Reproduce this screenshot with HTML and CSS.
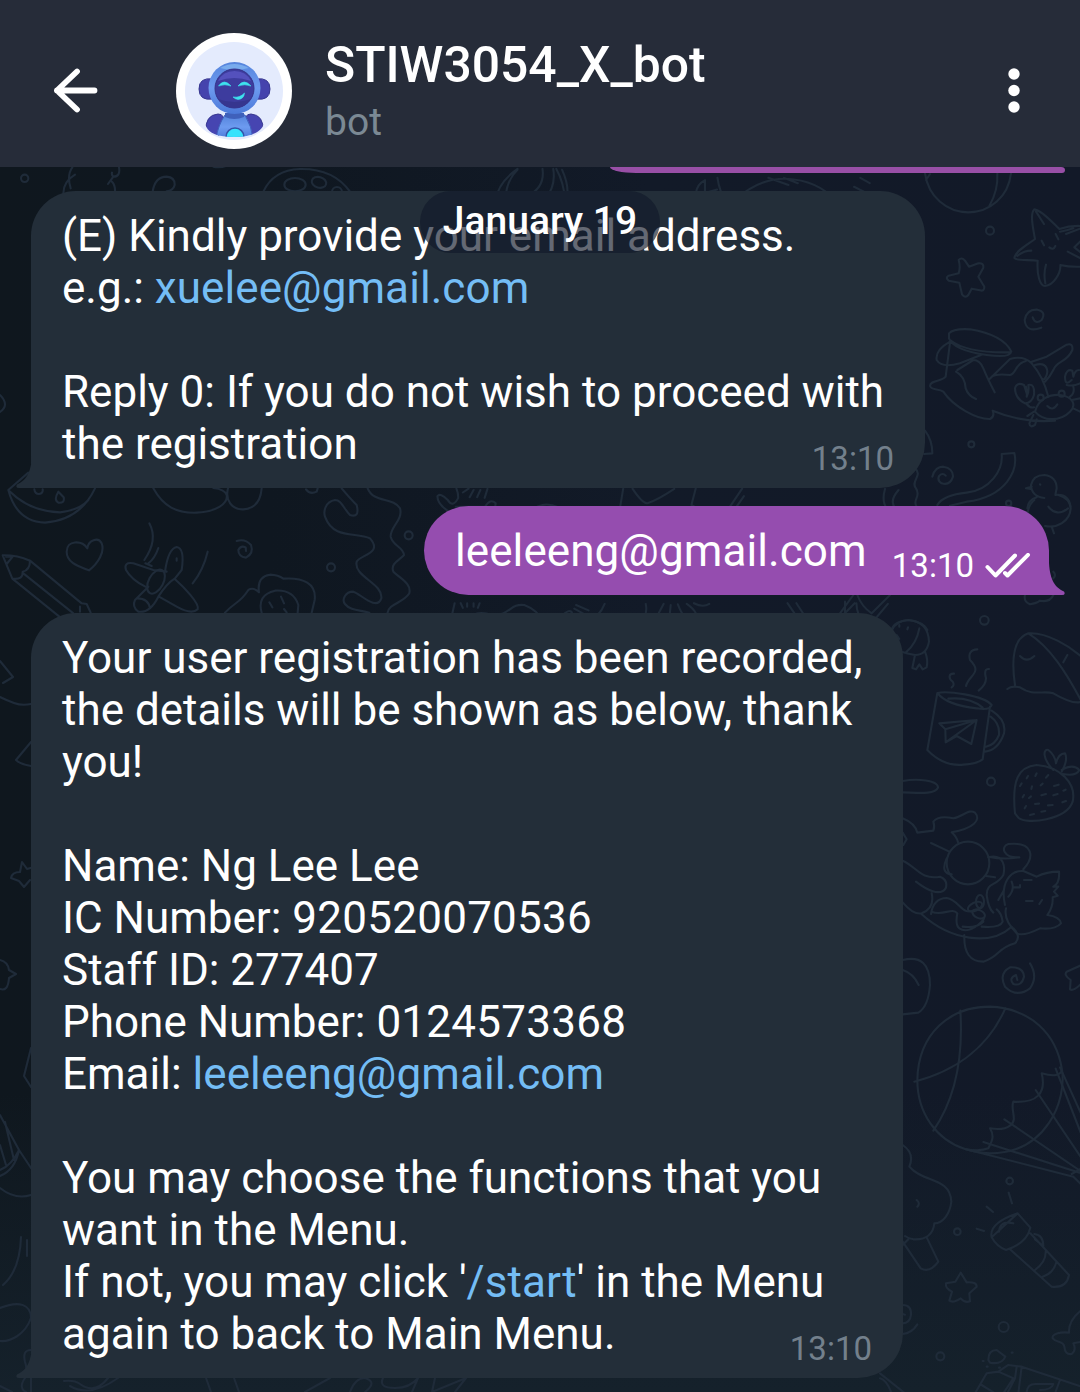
FILE: index.html
```html
<!DOCTYPE html>
<html lang="en">
<head>
<meta charset="utf-8">
<title>STIW3054_X_bot</title>
<link rel="stylesheet" href="styles.css">
</head>
<body>
<div class="app">
  <svg class="wallpaper" viewBox="0 0 1080 1392" aria-hidden="true">
    <!-- top strip -->
    <g transform="translate(0 160) scale(.33333)">
      <circle cx="74" cy="55" r="11"/>
      <path d="M217 22Q200 45 212 85M225 44Q190 65 190 100M357 22Q362 50 340 50Q334 44 336 38M340 50L324 72M336 65Q346 75 345 95M458 95Q465 50 500 50Q525 52 524 75Q520 92 500 94M640 20Q660 24 680 17M790 95Q820 30 900 27Q1000 25 1050 95"/>
      <ellipse cx="885" cy="74" rx="32" ry="20"/><ellipse cx="957" cy="67" rx="22" ry="16" transform="rotate(15 957 67)"/><circle cx="1011" cy="96" r="15"/>
    </g>
    <g transform="translate(380 160) scale(.4464)">
      <path d="M258 92Q265 50 308 20M282 92Q280 50 308 22M332 80Q370 60 364 20M368 90Q395 60 388 20M395 20Q412 50 415 92M408 22Q425 60 418 85L464 72Q465 80 455 92M712 92Q700 60 728 45V74L755 66M756 40Q760 70 775 92M792 92Q850 40 910 42Q980 45 1022 92M870 40L915 56M905 40L936 52M1062 60L1098 78M1076 40L1097 52"/>
    </g>
    <!-- right side, beside the first message -->
    <g transform="translate(900 160) scale(.33333)">
      <path d="M75 40C85 110 140 157 205 157S325 110 333 40M292 40Q295 90 268 138M78 60L90 42"/>
      <circle cx="270" cy="212" r="12"/><circle cx="214" cy="853" r="9"/><circle cx="326" cy="1030" r="8"/>
      <path d="M405 237C398 200 390 160 403 148C425 150 460 190 478 207Q510 196 545 198M405 237C380 255 345 275 343 294C350 304 390 298 413 302C410 345 420 378 435 378C460 376 483 340 481 315Q510 322 545 320M408 155L432 192M352 288Q370 272 394 272M436 370Q430 340 438 314M480 215Q500 212 520 205M503 275L540 294M498 222L540 206M545 240L523 262L545 280M448 262Q460 272 466 258M467 222L475 238M425 242L432 256"/>
      <path d="M176 300Q185 290 195 302L207 320L235 310Q252 308 250 323L235 350L253 380Q253 395 240 391L215 386L205 405Q196 416 186 403L178 368L146 362Q135 354 146 347L176 340Q182 322 176 300Z"/>
      <path d="M398 472Q406 495 425 480Q440 455 412 449Q380 447 374 480Q378 520 424 503"/>
      <path d="M147 520Q160 505 210 508Q310 525 334 575Q330 595 260 585Q160 570 147 535ZM150 540Q200 580 333 577M150 545Q105 570 110 600Q125 625 180 610L243 585M150 548L137 650M137 650C125 665 90 660 90 678C95 692 115 685 130 695C160 740 230 778 270 777Q285 770 278 752Q370 790 465 782M168 635Q195 650 197 685Q205 708 228 717M172 630L220 600Q240 600 250 625T284 697M268 658L330 597Q370 585 395 610Q430 650 445 710M275 650Q290 640 330 645C350 640 345 610 378 603M395 605L440 590L500 554Q520 548 517 570C500 610 470 600 460 630Q450 650 435 665M405 615Q440 605 442 635Q440 655 428 660"/>
      <path d="M405 755C415 715 450 703 480 705C520 710 530 735 510 755C480 785 430 785 405 755ZM378 680Q382 700 380 710Q388 695 385 675Q405 670 402 705Q395 730 375 730Q345 715 345 685Q350 665 372 675L380 700M380 732Q390 745 402 742M515 660Q495 680 495 650Q500 625 517 632L520 650Q525 630 537 630M500 675Q520 680 540 670M520 680Q525 700 510 710M442 738Q458 755 472 733M402 755L382 768M400 765L388 790Q390 805 405 795L410 778M520 745L540 755M515 720L540 715"/>
      <circle cx="422" cy="713" r="9"/><circle cx="485" cy="701" r="9"/>
      <path d="M75 812Q97 840 97 880L72 882M45 925C70 945 30 965 48 985C65 1010 35 1020 50 1040M97 950Q105 920 130 920Q160 925 159 950Q150 978 125 970Q110 960 118 947Q128 937 137 947M112 1035Q130 1005 200 998C270 990 310 930 305 882L343 879C355 930 320 1010 200 1025L150 1037"/>
      <path d="M433 1014Q395 1010 393 975Q400 945 433 945Q470 950 470 985L466 1005Q505 1000 512 1040M395 988L378 985L395 980M410 1012Q385 1020 382 1045M420 973L421 974"/>
    </g>
    <!-- around the outgoing message -->
    <g transform="translate(0 440) scale(.33333)">
      <path d="M25 150L85 98M25 150Q50 245 135 248Q240 240 285 145M27 152Q90 215 180 217Q240 210 265 180M103 148Q105 162 117 162Q130 160 128 148M175 155Q160 180 175 188Q195 190 191 172ZM460 145C490 200 530 220 590 218C650 215 685 190 680 165Q675 148 640 144M684 145C675 180 695 210 730 208Q780 205 785 145M918 148Q930 165 950 155L953 145M262 325C245 300 200 300 200 335C200 370 240 380 267 391C295 370 315 335 305 310C295 290 265 300 262 325Z"/>
      <path d="M8 346Q50 345 90 362L245 490L260 492L272 518M8 346L37 416L178 530M37 416Q70 420 68 395Q90 390 90 362M70 400L220 520M240 500V515M18 350L38 350L20 372"/>
      <path d="M448 250Q475 300 433 360M475 324Q465 355 445 370M623 335Q610 390 578 430M436 370L455 378M436 440Q395 420 378 390Q370 365 400 370L460 390L500 395M495 395Q505 325 530 321Q555 325 545 390L525 415Q500 430 475 470Q450 520 415 515Q395 500 405 480L445 440M525 418C550 440 600 490 593 508Q575 525 530 500L477 470M412 475Q445 475 450 505M530 355V362"/>
      <ellipse cx="468" cy="425" rx="22" ry="39" transform="rotate(28 468 425)"/>
      <path d="M710 303Q735 295 753 315Q762 340 738 353Q715 350 715 330Q722 315 737 322L738 333"/>
      <circle cx="993" cy="382" r="12"/><circle cx="1226" cy="286" r="12"/>
      <path d="M675 518C705 485 720 490 745 450Q760 440 777 457Q770 410 810 404Q835 405 850 416C910 412 950 430 944 480L935 518M785 518Q770 465 825 452Q880 448 895 495L893 518M808 487L817 502M843 470L852 490M852 507L860 517"/>
      <path d="M1025 145Q1050 175 1070 195Q1080 235 1050 225C1030 205 1025 180 1005 180C975 185 970 215 975 230C1000 300 1070 275 1110 295C1150 340 1080 345 1070 365C1060 410 1150 430 1144 475C1130 515 1080 460 1060 455C1035 455 1025 480 1035 492C1050 512 1080 510 1108 518M1103 145C1120 190 1180 170 1200 205C1210 240 1170 260 1172 290C1180 320 1210 320 1212 345C1200 360 1170 370 1180 395C1200 415 1235 430 1228 460C1210 490 1165 490 1162 520"/>
    </g>
    <g transform="translate(360 480) scale(.35714)">
      <path d="M248 88Q215 65 217 45Q225 35 245 55Q260 80 275 50Q275 35 270 24M288 35L304 24M318 28L307 48M337 28L328 48M357 25L349 50M268 75H350Q365 50 380 65L378 78M490 78Q520 60 555 76M737 24L728 78M763 24Q790 65 805 65Q830 58 880 25M940 24L928 70L943 78M1070 24L1035 76M1075 45L1052 78M1470 25Q1460 60 1475 80M1508 28Q1480 60 1500 80"/>
      <path d="M265 345L253 398M282 345L288 358M300 345V355M318 345V355M335 345L330 358M302 398C310 370 340 368 370 378C420 380 420 345 460 350Q500 365 512 398M485 398L570 376Q600 350 595 398M515 398L560 388M605 350L640 365M600 360L635 380M600 375L630 392M685 347Q670 385 642 388M730 398Q735 385 760 398M800 347Q805 370 795 385Q805 400 830 385L850 347M865 398L870 350M890 348Q910 400 935 395Q955 375 915 347M935 345Q960 358 978 347M1197 345L1228 390Q1240 395 1245 380L1222 345M1333 398L1385 345M1365 398L1360 375M1478 347L1430 404M1390 345Q1390 380 1415 400"/>
      <circle cx="1055" cy="395" r="13"/>
    </g>
    <g transform="translate(840 430) scale(.33333)">
      <path d="M563 250Q565 225 583 210M655 195Q690 205 692 235C690 275 650 295 615 288M625 230Q650 262 684 235M635 290L642 310M640 425Q650 435 640 445M555 495Q550 515 570 523Q590 520 600 512Q630 518 640 495M0 550L40 495M15 550V515M52 495Q65 530 95 550L150 495M155 600Q160 575 205 570Q250 575 262 600"/>
      <circle cx="433" cy="571" r="13"/>
    </g>
    <!-- right side, beside the second message -->
    <g transform="translate(880 600) scale(.33333)">
      <path d="M36 90Q50 62 85 60Q145 65 147 125Q140 165 105 165Q80 160 65 155M118 85Q110 130 77 158M105 165L97 204L108 208L118 193L128 208L140 202Q145 180 135 155M50 105L58 117M58 75V80M84 82L82 88"/>
      <circle cx="333" cy="545" r="12"/>
      <path d="M292 148Q262 150 270 180C310 220 265 225 258 258M222 221C205 220 205 235 218 245Q225 255 215 262M327 207Q310 205 318 235Q318 255 296 272"/>
      <path d="M172 279C200 272 310 285 335 315Q330 332 290 325Q200 315 172 279ZM172 279L142 450Q190 500 250 494Q290 492 308 478L330 320M205 296Q270 290 308 323M335 332Q380 360 372 400Q355 450 315 455M332 350Q360 370 357 405Q345 435 318 440M178 370L290 360L274 432L230 408L197 427L196 388ZM196 388L290 360L197 427"/>
      <path d="M405 255Q385 120 445 100C500 95 570 140 605 170M445 100C510 140 560 220 605 305M382 267Q395 256 420 262C460 290 490 270 520 280Q580 315 605 305M420 168Q440 190 463 168M562 165L550 187"/>
      <path d="M405 640C395 540 415 500 470 495C540 500 590 550 578 605C560 660 440 675 415 653ZM520 510C485 475 490 445 505 450Q525 465 528 490Q535 460 555 460Q565 480 545 515M545 510Q580 490 598 510Q590 530 548 522"/>
      <path d="M440 535L444 528M466 528L470 520M498 533L505 525M420 558L425 550M454 567L456 559M482 556L488 551M522 558L536 554M550 572L557 569M428 592L432 585M447 594L453 589M484 586L498 582M520 586L533 582M465 612L477 611M504 616L518 615M547 607L558 603M434 625L438 618M450 645L462 642M484 635L496 633"/>
      <path d="M68 543C110 535 175 540 174 563C165 585 110 578 68 577M68 655Q105 670 112 698L160 692Q165 680 160 665Q175 645 220 655C250 650 265 625 285 638C305 660 280 685 215 697Q230 710 234 727M153 729L208 755M68 698L80 718L70 735"/>
      <circle cx="264" cy="789" r="64"/>
      <path d="M68 782C110 800 120 840 180 830Q205 840 197 865C180 890 140 870 108 845M155 880Q165 925 125 940Q100 945 68 907M200 775Q180 820 215 823M325 772C375 760 375 805 370 825C350 860 320 845 320 885Q325 925 340 938M325 770Q370 780 418 772M318 828L345 832M418 772C370 775 360 740 385 732C460 725 465 770 430 808M153 942Q160 895 200 894C240 900 245 950 285 930M155 935C190 950 215 920 232 940Q225 975 238 985C265 1005 310 965 312 955M125 943C210 1020 330 1040 395 980M305 980Q360 985 368 965Q365 940 350 928M248 980Q290 985 310 965M253 1005Q250 1085 310 1085C360 1070 350 1045 405 1030Q425 1010 400 985"/>
      <path d="M375 915C360 850 390 810 430 813L470 830Q500 815 537 815Q540 850 520 860L535 860L522 875L533 887L518 892Q520 920 502 945Q540 950 543 970Q525 990 480 985Q430 1010 410 1000Q370 960 378 925M372 870L355 900M432 840H455M438 903H458M478 912L486 900M395 845Q405 870 385 890M400 862H420V855"/>
      <ellipse cx="285" cy="920" rx="23" ry="12" transform="rotate(-25 285 920)"/><ellipse cx="300" cy="905" rx="12" ry="20"/><ellipse cx="296" cy="942" rx="20" ry="12" transform="rotate(25 296 942)"/>
    </g>
    <g transform="translate(880 960) scale(.33333)">
      <path d="M68 0Q150 -20 150 75Q145 140 115 158L68 163M68 30Q100 40 116 75M450 10Q475 50 450 85Q410 115 375 80Q355 40 390 22Q430 20 432 50Q425 80 400 72Q385 55 408 45L412 60M605 15L560 35Q550 45 572 60L570 88Q580 95 605 70"/>
      <path d="M255 567C170 540 112 460 112 360C115 220 210 140 330 140C450 145 530 220 546 330C560 420 500 580 330 580Q290 578 255 567ZM241 152C250 290 230 410 160 512M376 145C330 250 240 330 103 365M546 330Q540 355 485 340C500 400 470 430 400 425C390 450 415 480 390 497Q370 512 330 505C345 530 335 545 325 565Q300 575 255 567"/>
      <path d="M310 546L605 640M373 478L600 632M467 390L605 595M527 326L605 525M540 322L605 465M255 567L580 650M580 650L605 675M575 642L605 625"/>
      <path d="M68 555Q105 580 88 620C130 670 210 650 214 725C210 760 190 790 163 790C160 820 140 840 100 838Q85 835 75 828M110 720Q122 730 112 740M68 845L122 925Q150 940 175 905L140 832M68 855L85 838"/>
      <circle cx="389" cy="663" r="10"/><circle cx="232" cy="815" r="10"/><circle cx="371" cy="1101" r="15"/><circle cx="181" cy="1189" r="12"/>
      <path d="M386 698L396 730M320 740L339 756M290 806L312 813M413 760L335 832Q350 860 378 870Q440 850 451 803ZM335 832Q325 790 413 760M357 815Q360 780 400 790M390 868L515 980Q560 985 567 945L451 820M463 822Q490 825 490 858L465 838M497 870Q500 905 465 930M529 907Q520 940 488 950"/>
      <path d="M242 938L260 967Q290 965 290 980L268 1000L270 1024Q255 1030 242 1015Q220 1030 208 1022L216 995Q195 985 198 970L226 965ZM68 1035Q95 1035 93 1065Q90 1090 68 1090M68 1062L75 1064M68 1122Q95 1120 112 1093"/>
      <path d="M605 1050Q565 1080 567 1118C545 1115 515 1120 518 1135C530 1150 550 1140 553 1160Q555 1185 575 1182Q590 1170 580 1150L605 1145M325 1200Q325 1170 350 1170L376 1190Q365 1215 330 1208ZM285 1300L320 1240L355 1235L385 1215L425 1220L605 1280M305 1275L345 1300M355 1235L400 1255L370 1300M410 1220L405 1255L382 1300M425 1220L415 1300M440 1300Q440 1270 470 1272H520Q515 1290 480 1290M540 1260L525 1300M0 1240L75 1300M0 1255Q20 1260 35 1300M308 1203H311M320 1220H323M395 1178H398M357 1223H360"/>
    </g>
    <!-- left edge -->
    <g>
      <path d="M0 661L13 677L3 683M0 697Q6 700 14 703Q22 706 31 704M31 742L16 760Q20 764 31 766M11 878Q12 872 20 872L22 862L27 869L34 867M11 878L19 881L24 887L30 880M0 960Q8 962 9 970L16 974L9 978Q8 992 0 989M31 1048L24 1076L31 1087M0 1115L19 1150Q12 1165 0 1170M5 1122L14 1160M0 1145L6 1165M0 1188Q15 1200 31 1195M0 1176Q15 1170 19 1150L31 1168M21 1237Q20 1270 3 1285M27 1240V1256M0 1308C20 1300 31 1305 31 1318C25 1335 10 1342 0 1341M31 1350Q22 1350 25 1362Q28 1370 24 1375M25 1378Q18 1388 26 1392M31 1378V1392M0 1386L12 1392M0 395Q10 405 0 412"/>
      <path d="M64 1381Q75 1380 80 1384Q95 1395 108 1378M70 1386Q90 1398 118 1378M206 1378L211 1392M234 1378L239 1392M305 1392L330 1378M350 1392Q355 1378 365 1378Q378 1382 365 1392M383 1378Q378 1388 395 1388Q410 1388 418 1378L412 1392M435 1378L432 1392L466 1378L455 1392"/>
    </g>
  </svg>

  <header class="header">
    <svg class="back" viewBox="0 0 48 48"><path d="M43.500 23.500H6M26 4.500L6 23.500L26 42.500"/></svg>
    <svg class="avatar" viewBox="0 0 116 116">
      <defs>
        <clipPath id="disc"><path d="M9 9H107V81L87.500 92Q82 104 58 104T30 93L9 81Z"/></clipPath>
        <linearGradient id="shell" x1="0" y1="0" x2="0" y2="1"><stop offset="0" stop-color="#5584dc"/><stop offset=".5" stop-color="#6d9bf0"/><stop offset="1" stop-color="#4b78d8"/></linearGradient>
      </defs>
      <circle cx="58" cy="58" r="58" fill="#fff"/>
      <circle cx="58" cy="58" r="49" fill="#e4ebfd"/>
      <g clip-path="url(#disc)">
        <path d="M37 46Q23 44 23 56T37 66ZM80 46Q94 44 94 56T80 66Z" fill="#4543ad" stroke="#35358f"/>
        <path d="M30 98Q29 82 42 81Q49 81 48 91L42 104H31ZM87 98Q88 82 75 81Q68 81 69 91L75 104H86Z" fill="#4645b1" stroke="#37368f"/>
        <path d="M49 82H69Q76 94 77 106H40Q42 92 49 82Z" fill="url(#shell)" stroke="#3f60bb"/>
        <path d="M49 80H68V84Q58 88 49 84Z" fill="#3f60bb"/>
        <circle cx="58.500" cy="55" r="26" fill="url(#shell)"/>
        <path d="M44 35Q58 27 73 35Q58 39 44 35Z" fill="#78abed"/>
        <circle cx="58.500" cy="55.500" r="19.500" fill="#3d3c9e" stroke="#353289"/>
        <path d="M42 48Q47 38 58.500 38T75 48Q58 42 42 48Z" fill="#5451bd"/>
        <path d="M42 66Q58 72 75 66Q69 75 58.500 75T42 66Z" fill="#36358f"/>
        <path d="M42.500 53Q48 45 55 53Q49 50.500 42.500 53ZM62 53Q68 45 75 53Q69 50.500 62 53ZM57 64Q64 65 68.500 60Q68 66 62 66.500Q59 66 57 64Z" fill="#3ee2ee" stroke="#3ee2ee" stroke-width=".6"/>
        <circle cx="59" cy="104" r="9" fill="#36e2fc" stroke="#3455a9" stroke-width="1.500"/>
      </g>
    </svg>
    <div class="peer">
      <div class="name">STIW3054_X_bot</div>
      <div class="status">bot</div>
    </div>
    <svg class="more" viewBox="0 0 12 46"><circle cx="6" cy="6" r="5.700"/><circle cx="6" cy="22.500" r="5.700"/><circle cx="6" cy="39" r="5.700"/></svg>
  </header>

  <main class="chat">
    <div class="previous"></div>
    <div class="date">January 19</div>

    <article class="msg in first">
      <p class="text">(E) Kindly provide your email address.<br>e.g.: <a>xuelee@gmail.com</a><br><br>Reply 0: If you do not wish to proceed with<br>the registration</p>
      <time class="time">13:10</time>
      <svg class="tail" viewBox="0 0 16 32"><path d="M16 0C15 18 9 25 1 28.500Q-1 32 3 32H16Z"/></svg>
    </article>

    <article class="msg out">
      <p class="text">leeleeng@gmail.com</p>
      <time class="time">13:10</time>
      <svg class="checks" viewBox="0 0 46 26"><path d="M2.500 14L10.500 22.500L30 2.500M20 20L22.500 22.500L43 1.800"/></svg>
      <svg class="tail" viewBox="0 0 16 32"><path d="M0 0C1 18 7 25 15 28.500Q17 32 13 32H0Z"/></svg>
    </article>

    <article class="msg in second">
      <p class="text">Your user registration has been recorded,<br>the details will be shown as below, thank<br>you!<br><br>Name: Ng Lee Lee<br>IC Number: <span class="digits">920520070536</span><br>Staff ID: 277407<br>Phone Number: <span class="digits">0124573368</span><br>Email: <a>leeleeng@gmail.com</a><br><br>You may choose the functions that you<br>want in the Menu.<br>If not, you may click '<a>/start</a>' in the Menu<br>again to back to Main Menu.</p>
      <time class="time">13:10</time>
      <svg class="tail" viewBox="0 0 16 32"><path d="M16 0C15 18 9 25 1 28.500Q-1 32 3 32H16Z"/></svg>
    </article>
  </main>
</div>
</body>
</html>
```
FILE: styles.css
```css
* { box-sizing: border-box; }
body {
  margin: 0;
  font-family: Roboto, sans-serif;
  color: #fff;
}
.app {
  position: relative;
  height: 1392px;
  overflow: hidden;
  background: linear-gradient(0deg, #15212b 0, rgba(21, 33, 43, 0) 300px), linear-gradient(90deg, #0f171e 0, #0f1720 25%, #121a28 60%, #121928 100%);
}
.wallpaper {
  position: absolute;
  inset: 0;
  width: 1080px;
  height: 1392px;
  fill: none;
  stroke: #1f2b39;
  stroke-linecap: round;
  stroke-linejoin: round;
}
.wallpaper path, .wallpaper circle, .wallpaper ellipse {
  vector-effect: non-scaling-stroke;
  stroke-width: 2.1px;
}
.header {
  position: relative;
  display: flex;
  align-items: center;
  height: 167px;
  padding: 14px 60px 0 51px;
  background: #262c39;
}
.back {
  width: 48px;
  height: 48px;
  fill: none;
  stroke: #fff;
  stroke-width: 5.8;
  stroke-linecap: round;
  stroke-linejoin: round;
}
.avatar { width: 116px; height: 116px; margin-left: 77px; }
.peer { flex: 1; margin-left: 33px; }
.name {
  font-size: 49.8px;
  line-height: 58px;
  font-weight: 500;
  white-space: nowrap;
}
.status {
  font-size: 39px;
  line-height: 48px;
  margin-top: 4px;
  color: #7b8994;
}
.more { width: 12px; height: 46px; fill: #fff; }
.chat {
  position: relative;
  display: flex;
  flex-direction: column;
  align-items: flex-start;
}
.previous {
  align-self: flex-end;
  width: 455px;
  height: 6px;
  margin-right: 15px;
  background: #984fa6;
  border-radius: 0 4px 3px 26px / 0 3px 3px 6px;
}
.date {
  position: absolute;
  z-index: 2;
  top: 24px;
  left: 420px;
  width: 240px;
  height: 62px;
  border-radius: 31px;
  background: rgba(17, 25, 42, .65);
  font-size: 39px;
  line-height: 60px;
  font-weight: 500;
  text-align: center;
}
.msg { position: relative; display: flex; align-items: flex-end; }
.text {
  margin: 0;
  flex: 1;
  font-size: 44px;
  line-height: 52px;
  white-space: nowrap;
}
.text a { color: #74bdf5; letter-spacing: .08px; }
.digits { letter-spacing: .25px; }
.time { font-size: 33px; line-height: 40px; color: #73808c; }
.in {
  margin-left: 31px;
  padding-left: 31px;
  background: #232e39;
  border-radius: 45px 45px 45px 0;
}
.in .text { width: 0; align-self: flex-start; }
.in .time { margin: 0 31px 9px 0; }
.first { width: 894px; height: 297px; margin-top: 18px; padding-top: 19px; }
.second { width: 872px; height: 765px; margin-top: 18px; padding-top: 19px; }
.out {
  align-self: flex-end;
  width: 625px;
  height: 89px;
  margin: 18px 31px 0 0;
  padding: 0 18px 0 31px;
  background: #954daf;
  border-radius: 45px 45px 0 45px;
}
.out .text { margin-bottom: 18px; letter-spacing: .08px; }
.out .time { color: #fff; margin-bottom: 9px; }
.checks {
  width: 46px;
  height: 26px;
  margin: 0 0 16px 11px;
  fill: none;
  stroke: #fff;
  stroke-width: 4;
  stroke-linecap: round;
  stroke-linejoin: round;
}
.tail { position: absolute; bottom: 0; width: 16px; height: 32px; }
.in .tail { left: -15.500px; fill: #232e39; }
.out .tail { right: -15.500px; fill: #954daf; }
```
